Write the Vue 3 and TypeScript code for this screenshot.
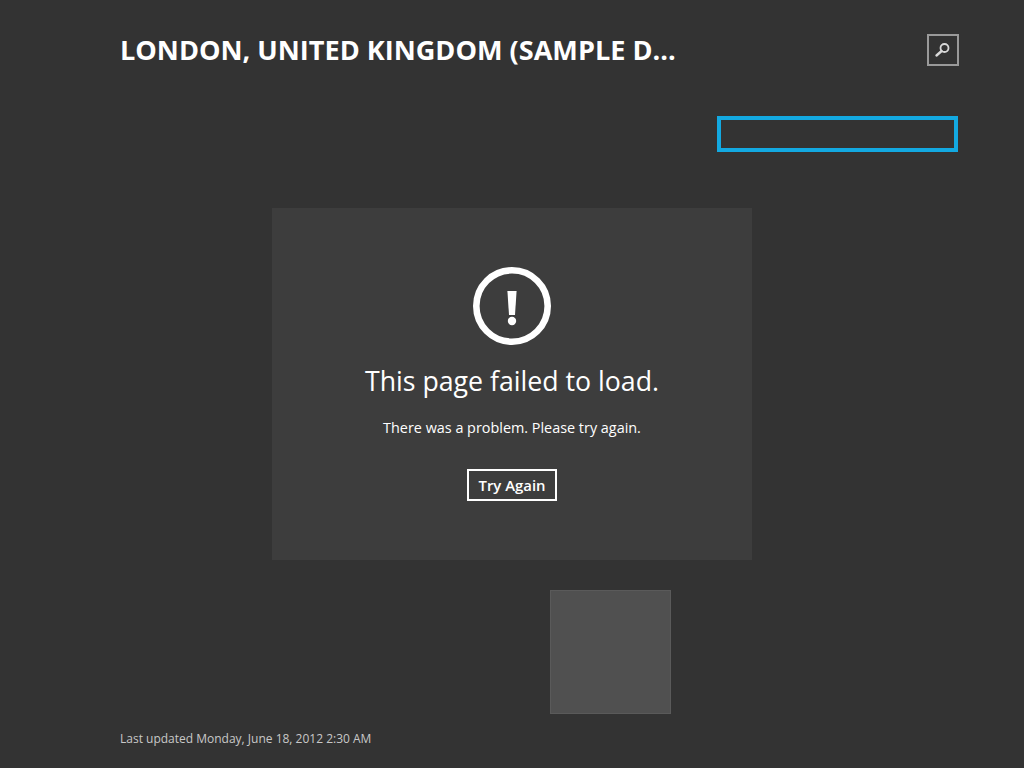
<template>
  <div class="page">
    <header class="header">
      <h1 class="title">{{ title }}</h1>
      <button type="button" class="search-btn" aria-label="Search">
        <svg width="20" height="20" viewBox="0 0 20 20">
          <circle cx="11.5" cy="8" r="4" fill="none" stroke="#d8d8d8" stroke-width="1.8" />
          <path d="M8.6 11 L3.5 15.5" stroke="#d8d8d8" stroke-width="2.4" stroke-linecap="round" />
        </svg>
      </button>
    </header>

    <div class="selector-row">
      <div class="selector"></div>
    </div>

    <section class="error-card">
      <svg class="error-icon" width="80" height="80" viewBox="0 0 80 80">
        <circle cx="40" cy="40" r="35.7" fill="none" stroke="#fff" stroke-width="6.6" />
        <path d="M35.4 25 H44.6 L43 49 H37 Z" fill="#fff" />
        <circle cx="40" cy="55" r="4.2" fill="#fff" />
      </svg>
      <h2 class="error-title">This page failed to load.</h2>
      <p class="error-message">There was a problem. Please try again.</p>
      <button type="button" class="retry-btn">Try Again</button>
    </section>

    <div class="tile-row">
      <div class="tile"></div>
    </div>

    <footer class="updated">Last updated Monday, June 18, 2012 2:30 AM</footer>
  </div>
</template>

<script setup lang="ts">
const title = 'LONDON, UNITED KINGDOM (SAMPLE D...'
</script>

<style>
html,
body {
  background: #333333;
}
</style>

<style scoped>
.page {
  width: 1024px;
  height: 768px;
  overflow: hidden;
  box-sizing: border-box;
  background: #333333;
  font-family: "Open Sans", "Noto Sans", sans-serif;
  color: #fff;
  display: flex;
  flex-direction: column;
}

.header {
  height: 66px;
  padding: 34px 65px 0 120px;
  box-sizing: border-box;
  display: flex;
  justify-content: space-between;
  align-items: center;
}

.title {
  margin: 0;
  font-size: 27.1px;
  font-weight: 700;
  line-height: 32px;
  white-space: nowrap;
}

.search-btn {
  width: 32px;
  height: 32px;
  padding: 0;
  background: transparent;
  border: 2px solid #9a9a9a;
  display: flex;
  align-items: center;
  justify-content: center;
}

.selector-row {
  display: flex;
  justify-content: flex-end;
  padding: 50px 66px 0 0;
}

.selector {
  width: 241px;
  height: 36px;
  box-sizing: border-box;
  border: 4px solid #13a9e1;
}

.error-card {
  width: 480px;
  height: 352px;
  margin: 56px 0 0 272px;
  padding-top: 58px;
  box-sizing: border-box;
  background: #3d3d3d;
  display: flex;
  flex-direction: column;
  align-items: center;
}

.error-title {
  margin: 17px 0 0;
  font-size: 26.7px;
  font-weight: 400;
  line-height: 36px;
  white-space: nowrap;
}

.error-message {
  margin: 19px 0 0;
  font-size: 14.4px;
  line-height: 20px;
}

.retry-btn {
  margin-top: 31px;
  width: 90px;
  height: 32px;
  padding: 0;
  background: transparent;
  border: 2px solid #fff;
  color: #fff;
  font-family: inherit;
  font-size: 14.9px;
  font-weight: 600;
}

.tile-row {
  padding: 30px 0 0 550px;
}

.tile {
  width: 121px;
  height: 124px;
  box-sizing: border-box;
  background: #505050;
  border: 1px solid #5a5a5a;
}

.updated {
  margin: 16px 0 0 120px;
  font-size: 12px;
  line-height: 17px;
  color: #c8c8c8;
}
</style>
